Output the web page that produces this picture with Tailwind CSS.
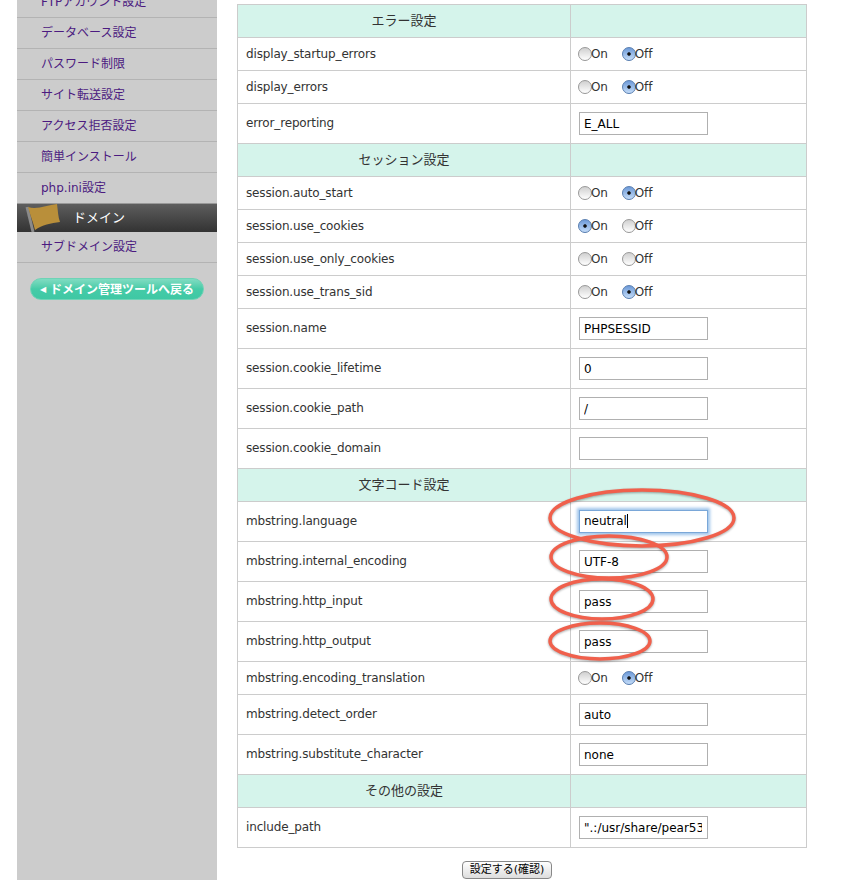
<!DOCTYPE html>
<html lang="ja">
<head>
<meta charset="UTF-8">
<title>php.ini設定</title>
<script src="https://cdn.jsdelivr.net/npm/@tailwindcss/browser@4"></script>
</head>
<body class="bg-white">
<div class="relative w-[855px] h-[880px] overflow-hidden flex font-['DejaVu_Sans','Noto_Sans_CJK_JP',sans-serif] text-[12px] text-[#333]">
  <!-- Sidebar -->
  <aside class="ml-[17px] w-[200px] h-full bg-[#cccccc] shrink-0 text-[#4b1a80]">
    <ul class="-mt-[13px]">
      <li class="h-[31px] border-b border-[#b3b3b3] pl-[24px] leading-[30px]">FTPアカウント設定</li>
      <li class="h-[31px] border-b border-[#b3b3b3] pl-[24px] leading-[30px]">データベース設定</li>
      <li class="h-[31px] border-b border-[#b3b3b3] pl-[24px] leading-[30px]">パスワード制限</li>
      <li class="h-[31px] border-b border-[#b3b3b3] pl-[24px] leading-[30px]">サイト転送設定</li>
      <li class="h-[31px] border-b border-[#b3b3b3] pl-[24px] leading-[30px]">アクセス拒否設定</li>
      <li class="h-[31px] border-b border-[#b3b3b3] pl-[24px] leading-[30px]">簡単インストール</li>
      <li class="h-[30px] pl-[24px] leading-[30px]">php.ini設定</li>
    </ul>
    <div class="relative h-[29px] border-t border-[#999999] border-b-[#2f2f2f] bg-gradient-to-b from-[#5e5e5e] to-[#333333] text-white text-[13px] leading-[27px] pl-[56px]">
      <svg class="absolute left-[8px] -top-px" width="36" height="30" viewBox="0 0 36 30">
        <path d="M2 4 L8 29" stroke="#8a8a8a" stroke-width="3" fill="none"/>
        <path d="M3 4 C12 7 22 2 32 1 C33 8 33 14 35 19 C26 20 17 22 10 27 C8 19 5 11 3 4 Z" fill="#b98f3a"/>
      </svg>
      ドメイン
    </div>
    <div class="h-[31px] border-b border-[#b3b3b3] pl-[24px] leading-[30px]">サブドメイン設定</div>
    <div class="mt-[15px] ml-[13px] w-[174px] h-[22px] rounded-full border border-[#6fd3b6] bg-gradient-to-b from-[#7fdcc2] via-[#45cba7] to-[#3fc8a4] text-white font-bold text-[12px] leading-[20px] pt-px flex items-center justify-center whitespace-nowrap">
      <span class="text-[8px] mr-[4px]">◀</span>ドメイン管理ツールへ戻る
    </div>
  </aside>

  <!-- Main -->
  <main class="ml-[20px] pt-[4px] w-[570px]">
    <table class="w-[569px] table-fixed border-collapse border border-[#cccccc] tracking-[-0.15px]">
      <colgroup><col class="w-[333px]"><col class="w-[236px]"></colgroup>
      <tbody>
        <tr class="h-[33px] bg-[#d5f4eb]"><th class="border border-[#cccccc] font-normal text-center text-[13px] tracking-normal">エラー設定</th><td class="border border-[#cccccc]"></td></tr>
        <tr class="h-[33px]"><td class="border border-[#cccccc] pl-[8px]">display_startup_errors</td><td class="border border-[#cccccc] pl-[7px]"><div class="flex items-center"><span class="w-[14px] h-[14px] rounded-full border border-[#999999] bg-gradient-to-b from-[#d0d0d0] to-white"></span><span class="-ml-px">On</span><span class="ml-[14px] w-[14px] h-[14px] rounded-full border border-[#5a7fb0] bg-[radial-gradient(circle,#111_0,#111_1.3px,transparent_2.2px),linear-gradient(#6d9ad8,#c3dcf8)]"></span><span class="-ml-px">Off</span></div></td></tr>
        <tr class="h-[33px]"><td class="border border-[#cccccc] pl-[8px]">display_errors</td><td class="border border-[#cccccc] pl-[7px]"><div class="flex items-center"><span class="w-[14px] h-[14px] rounded-full border border-[#999999] bg-gradient-to-b from-[#d0d0d0] to-white"></span><span class="-ml-px">On</span><span class="ml-[14px] w-[14px] h-[14px] rounded-full border border-[#5a7fb0] bg-[radial-gradient(circle,#111_0,#111_1.3px,transparent_2.2px),linear-gradient(#6d9ad8,#c3dcf8)]"></span><span class="-ml-px">Off</span></div></td></tr>
        <tr class="h-[40px]"><td class="border border-[#cccccc] pl-[8px] pb-[2px]">error_reporting</td><td class="border border-[#cccccc] pl-[8px]"><input value="E_ALL" class="block w-[129px] h-[23px] border border-[#b0b0b0] px-[4px] text-black tracking-normal"></td></tr>

        <tr class="h-[33px] bg-[#d5f4eb]"><th class="border border-[#cccccc] font-normal text-center text-[13px] tracking-normal">セッション設定</th><td class="border border-[#cccccc]"></td></tr>
        <tr class="h-[33px]"><td class="border border-[#cccccc] pl-[8px]">session.auto_start</td><td class="border border-[#cccccc] pl-[7px]"><div class="flex items-center"><span class="w-[14px] h-[14px] rounded-full border border-[#999999] bg-gradient-to-b from-[#d0d0d0] to-white"></span><span class="-ml-px">On</span><span class="ml-[14px] w-[14px] h-[14px] rounded-full border border-[#5a7fb0] bg-[radial-gradient(circle,#111_0,#111_1.3px,transparent_2.2px),linear-gradient(#6d9ad8,#c3dcf8)]"></span><span class="-ml-px">Off</span></div></td></tr>
        <tr class="h-[33px]"><td class="border border-[#cccccc] pl-[8px]">session.use_cookies</td><td class="border border-[#cccccc] pl-[7px]"><div class="flex items-center"><span class="w-[14px] h-[14px] rounded-full border border-[#5a7fb0] bg-[radial-gradient(circle,#111_0,#111_1.3px,transparent_2.2px),linear-gradient(#6d9ad8,#c3dcf8)]"></span><span class="-ml-px">On</span><span class="ml-[14px] w-[14px] h-[14px] rounded-full border border-[#999999] bg-gradient-to-b from-[#d0d0d0] to-white"></span><span class="-ml-px">Off</span></div></td></tr>
        <tr class="h-[33px]"><td class="border border-[#cccccc] pl-[8px]">session.use_only_cookies</td><td class="border border-[#cccccc] pl-[7px]"><div class="flex items-center"><span class="w-[14px] h-[14px] rounded-full border border-[#999999] bg-gradient-to-b from-[#d0d0d0] to-white"></span><span class="-ml-px">On</span><span class="ml-[14px] w-[14px] h-[14px] rounded-full border border-[#999999] bg-gradient-to-b from-[#d0d0d0] to-white"></span><span class="-ml-px">Off</span></div></td></tr>
        <tr class="h-[33px]"><td class="border border-[#cccccc] pl-[8px]">session.use_trans_sid</td><td class="border border-[#cccccc] pl-[7px]"><div class="flex items-center"><span class="w-[14px] h-[14px] rounded-full border border-[#999999] bg-gradient-to-b from-[#d0d0d0] to-white"></span><span class="-ml-px">On</span><span class="ml-[14px] w-[14px] h-[14px] rounded-full border border-[#5a7fb0] bg-[radial-gradient(circle,#111_0,#111_1.3px,transparent_2.2px),linear-gradient(#6d9ad8,#c3dcf8)]"></span><span class="-ml-px">Off</span></div></td></tr>
        <tr class="h-[40px]"><td class="border border-[#cccccc] pl-[8px] pb-[2px]">session.name</td><td class="border border-[#cccccc] pl-[8px]"><input value="PHPSESSID" class="block w-[129px] h-[23px] border border-[#b0b0b0] px-[4px] text-black tracking-normal"></td></tr>
        <tr class="h-[40px]"><td class="border border-[#cccccc] pl-[8px] pb-[2px]">session.cookie_lifetime</td><td class="border border-[#cccccc] pl-[8px]"><input value="0" class="block w-[129px] h-[23px] border border-[#b0b0b0] px-[4px] text-black tracking-normal"></td></tr>
        <tr class="h-[40px]"><td class="border border-[#cccccc] pl-[8px] pb-[2px]">session.cookie_path</td><td class="border border-[#cccccc] pl-[8px]"><input value="/" class="block w-[129px] h-[23px] border border-[#b0b0b0] px-[4px] text-black tracking-normal"></td></tr>
        <tr class="h-[40px]"><td class="border border-[#cccccc] pl-[8px] pb-[2px]">session.cookie_domain</td><td class="border border-[#cccccc] pl-[8px]"><input value="" class="block w-[129px] h-[23px] border border-[#b0b0b0] px-[4px] text-black tracking-normal"></td></tr>

        <tr class="h-[33px] bg-[#d5f4eb]"><th class="border border-[#cccccc] font-normal text-center text-[13px] tracking-normal">文字コード設定</th><td class="border border-[#cccccc]"></td></tr>
        <tr class="h-[40px]"><td class="border border-[#cccccc] pl-[8px] pb-[2px]">mbstring.language</td><td class="border border-[#cccccc] pl-[8px]"><div class="relative w-[129px] h-[23px] border border-[#7aa7d8] shadow-[0_0_3px_2px_#9cc3ea] pl-[4px] leading-[21px] text-black tracking-normal">neutral<span class="inline-block w-px h-[14px] bg-black align-[-3px]"></span></div></td></tr>
        <tr class="h-[40px]"><td class="border border-[#cccccc] pl-[8px] pb-[2px]">mbstring.internal_encoding</td><td class="border border-[#cccccc] pl-[8px]"><input value="UTF-8" class="block w-[129px] h-[23px] border border-[#b0b0b0] px-[4px] text-black tracking-normal"></td></tr>
        <tr class="h-[40px]"><td class="border border-[#cccccc] pl-[8px] pb-[2px]">mbstring.http_input</td><td class="border border-[#cccccc] pl-[8px]"><input value="pass" class="block w-[129px] h-[23px] border border-[#b0b0b0] px-[4px] text-black tracking-normal"></td></tr>
        <tr class="h-[40px]"><td class="border border-[#cccccc] pl-[8px] pb-[2px]">mbstring.http_output</td><td class="border border-[#cccccc] pl-[8px]"><input value="pass" class="block w-[129px] h-[23px] border border-[#b0b0b0] px-[4px] text-black tracking-normal"></td></tr>
        <tr class="h-[33px]"><td class="border border-[#cccccc] pl-[8px]">mbstring.encoding_translation</td><td class="border border-[#cccccc] pl-[7px]"><div class="flex items-center"><span class="w-[14px] h-[14px] rounded-full border border-[#999999] bg-gradient-to-b from-[#d0d0d0] to-white"></span><span class="-ml-px">On</span><span class="ml-[14px] w-[14px] h-[14px] rounded-full border border-[#5a7fb0] bg-[radial-gradient(circle,#111_0,#111_1.3px,transparent_2.2px),linear-gradient(#6d9ad8,#c3dcf8)]"></span><span class="-ml-px">Off</span></div></td></tr>
        <tr class="h-[40px]"><td class="border border-[#cccccc] pl-[8px] pb-[2px]">mbstring.detect_order</td><td class="border border-[#cccccc] pl-[8px]"><input value="auto" class="block w-[129px] h-[23px] border border-[#b0b0b0] px-[4px] text-black tracking-normal"></td></tr>
        <tr class="h-[40px]"><td class="border border-[#cccccc] pl-[8px] pb-[2px]">mbstring.substitute_character</td><td class="border border-[#cccccc] pl-[8px]"><input value="none" class="block w-[129px] h-[23px] border border-[#b0b0b0] px-[4px] text-black tracking-normal"></td></tr>

        <tr class="h-[33px] bg-[#d5f4eb]"><th class="border border-[#cccccc] font-normal text-center text-[13px] tracking-normal">その他の設定</th><td class="border border-[#cccccc]"></td></tr>
        <tr class="h-[40px]"><td class="border border-[#cccccc] pl-[8px] pb-[2px]">include_path</td><td class="border border-[#cccccc] pl-[8px]"><input value='".:/usr/share/pear53:/usr/share/php' class="block w-[129px] h-[23px] border border-[#b0b0b0] pl-[4px] pr-[5px] text-black tracking-normal"></td></tr>
      </tbody>
    </table>
    <div class="mt-[13px] ml-[225px]">
      <button class="block w-[90px] h-[18px] rounded-[4px] border border-[#888888] bg-gradient-to-b from-white to-[#dddddd] text-[11px] leading-[16px] text-black">設定する(確認)</button>
    </div>
  </main>

  <!-- Hand-drawn annotations over the form -->
  <svg class="absolute left-0 top-0 pointer-events-none drop-shadow-[0_1px_1px_#00000055]" width="855" height="880" viewBox="0 0 855 880" fill="none" stroke="#f0604c" stroke-width="3.5">
    <ellipse cx="642" cy="518" rx="92" ry="28"/>
    <ellipse cx="609" cy="557" rx="58" ry="21"/>
    <ellipse cx="602" cy="599" rx="51" ry="20"/>
    <ellipse cx="600" cy="641" rx="50" ry="18"/>
  </svg>
</div>
</body>
</html>
